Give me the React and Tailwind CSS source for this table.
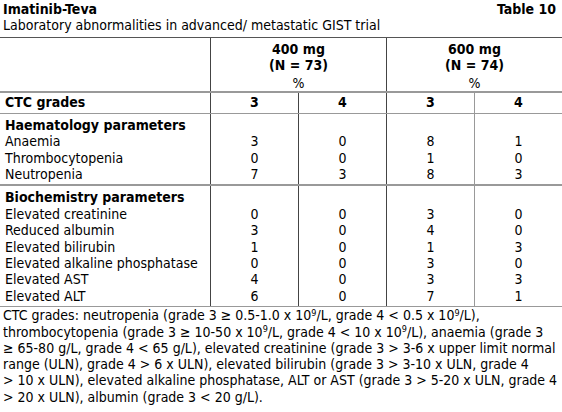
import React from "react";

const font = { fontFamily: '"Liberation Sans Narrow", "DejaVu Sans Condensed", "Liberation Sans", sans-serif' };

const haem = [
  ["Anaemia", "3", "0", "8", "1"],
  ["Thrombocytopenia", "0", "0", "1", "0"],
  ["Neutropenia", "7", "3", "8", "3"],
];
const bio = [
  ["Elevated creatinine", "0", "0", "3", "0"],
  ["Reduced albumin", "3", "0", "4", "0"],
  ["Elevated bilirubin", "1", "0", "1", "3"],
  ["Elevated alkaline phosphatase", "0", "0", "3", "0"],
  ["Elevated AST", "4", "0", "3", "3"],
  ["Elevated ALT", "6", "0", "7", "1"],
];

function Section({ title, rows }) {
  const cols = [1, 2, 3, 4];
  return (
    <div className="grid grid-cols-[211px_88px_88px_88px_1fr]">
      <div className="border-r border-[#444] pl-[5px] pt-[3px] pb-[2px]">
        <div className="font-bold">{title}</div>
        {rows.map((r) => (
          <div key={r[0]}>{r[0]}</div>
        ))}
      </div>
      {cols.map((c) => (
        <div
          key={c}
          className={
            "text-center pt-[3px] pb-[2px] " +
            (c === 4 ? "" : c === 3 ? "border-r border-[#999]" : "border-r border-[#444]")
          }
        >
          <div>&nbsp;</div>
          {rows.map((r) => (
            <div key={r[0]}>{r[c]}</div>
          ))}
        </div>
      ))}
    </div>
  );
}

export default function App() {
  return (
    <div className="w-[562px] h-[412px] bg-white text-black text-[14px] leading-[16.4px] overflow-hidden" style={font}>
      <div className="flex justify-between items-end pl-[3px] pr-[6px] pt-[1px]">
        <div className="font-bold">Imatinib-Teva</div>
        <div className="font-bold">Table 10</div>
      </div>
      <div className="pl-[3px]">Laboratory abnormalities in advanced/ metastatic GIST trial</div>
      <div className="mt-[3px] border-t border-[#555]">
        <div className="grid grid-cols-[211px_176px_1fr] h-[55px] border-b-2 border-[#999]">
          <div className="border-r border-[#444]"></div>
          <div className="border-r border-[#444] text-center pt-[3px]">
            <div className="font-bold">400 mg</div>
            <div className="font-bold">(N = 73)</div>
            <div className="mt-[1px]">%</div>
          </div>
          <div className="text-center pt-[3px]">
            <div className="font-bold">600 mg</div>
            <div className="font-bold">(N = 74)</div>
            <div className="mt-[1px]">%</div>
          </div>
        </div>
        <div className="grid grid-cols-[211px_88px_88px_88px_1fr] h-[21px] border-b border-[#999] font-bold items-stretch">
          <div className="border-r border-[#444] pl-[5px] pt-[1px]">CTC grades</div>
          <div className="border-r border-[#444] text-center pt-[1px]">3</div>
          <div className="border-r border-[#444] text-center pt-[1px]">4</div>
          <div className="border-r border-[#999] text-center pt-[1px]">3</div>
          <div className="text-center pt-[1px]">4</div>
        </div>
        <div className="border-b-2 border-[#999]">
          <Section title="Haematology parameters" rows={haem} />
        </div>
        <div className="border-b border-[#999]">
          <Section title="Biochemistry parameters" rows={bio} />
        </div>
      </div>
      <div className="pl-[3px] whitespace-nowrap leading-[16.3px]">
        CTC grades: neutropenia (grade 3 ≥ 0.5-1.0 x 10<sup className="text-[9px]">9</sup>/L, grade 4 &lt; 0.5 x 10<sup className="text-[9px]">9</sup>/L),
        <br />
        thrombocytopenia (grade 3 ≥ 10-50 x 10<sup className="text-[9px]">9</sup>/L, grade 4 &lt; 10 x 10<sup className="text-[9px]">9</sup>/L), anaemia (grade 3
        <br />
        ≥ 65-80 g/L, grade 4 &lt; 65 g/L), elevated creatinine (grade 3 &gt; 3-6 x upper limit normal
        <br />
        range (ULN), grade 4 &gt; 6 x ULN), elevated bilirubin (grade 3 &gt; 3-10 x ULN, grade 4
        <br />
        &gt; 10 x ULN), elevated alkaline phosphatase, ALT or AST (grade 3 &gt; 5-20 x ULN, grade 4
        <br />
        &gt; 20 x ULN), albumin (grade 3 &lt; 20 g/L).
      </div>
    </div>
  );
}
